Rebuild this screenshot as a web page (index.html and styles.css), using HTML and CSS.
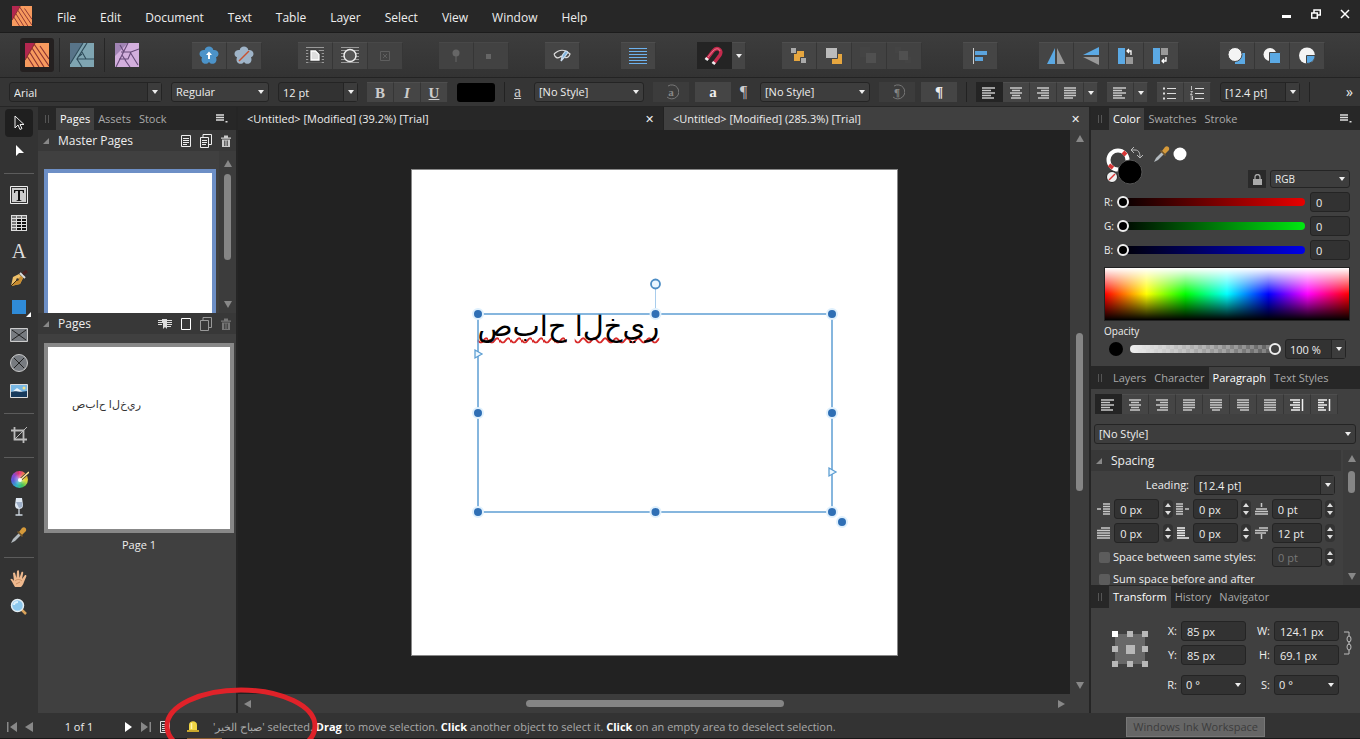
FILE: index.html
```html
<!DOCTYPE html>
<html lang="en">
<head>
    <meta charset="UTF-8">
    <meta name="viewport" content="width=device-width, initial-scale=1.0">
    <title>Publisher - Untitled</title>
    <link rel="stylesheet" href="styles.css">
</head>
<body>

    <!-- Shared icon shapes -->
    <svg class="icon-defs" width="0" height="0" aria-hidden="true">
        <symbol id="logo-publisher" viewBox="0 0 24 24">
            <path fill="#f79a5e" d="M0 0h24v24H0z"/>
            <path fill="#b3274f" d="M0 0h10L0 17z"/>
            <path stroke="#8a3030" stroke-width="1.1" fill="none" d="M10 0 0 17M9 1l15 22M7 5l12 19M4.500 9 14 24M2 13l7 11M15 3l9 13"/>
        </symbol>
        <symbol id="al-left" viewBox="0 0 14 12"><path d="M0 1h13M0 3.500h9M0 6h13M0 8.500h9M0 11h12"/></symbol>
        <symbol id="al-center" viewBox="0 0 14 12"><path d="M1 1h12M3 3.500h8M1 6h12M3 8.500h8M2 11h10"/></symbol>
        <symbol id="al-right" viewBox="0 0 14 12"><path d="M1 1h12M5 3.500h8M1 6h12M5 8.500h8M2 11h11"/></symbol>
        <symbol id="al-just" viewBox="0 0 14 12"><path d="M1 1h12M1 3.500h12M1 6h12M1 8.500h12M1 11h9"/></symbol>
        <symbol id="al-jcenter" viewBox="0 0 14 12"><path d="M1 1h12M1 3.500h12M1 6h12M1 8.500h12M3 11h8"/></symbol>
        <symbol id="al-jright" viewBox="0 0 14 12"><path d="M1 1h12M1 3.500h12M1 6h12M1 8.500h12M4 11h9"/></symbol>
        <symbol id="al-full" viewBox="0 0 14 12"><path d="M1 1h12M1 3.500h12M1 6h12M1 8.500h12M1 11h12"/></symbol>
        <symbol id="al-spine" viewBox="0 0 14 12"><path d="M0 1h10M3 3.500h7M0 6h10M3 8.500h7M1 11h9M12.500 0v12"/></symbol>
        <symbol id="al-away" viewBox="0 0 14 12"><path d="M1 1h9M1 3.500h6M1 6h9M1 8.500h6M1 11h8M12.500 0v12"/></symbol>
        <symbol id="panel-menu" viewBox="0 0 14 10"><path stroke="#ddd" stroke-width="1.500" d="M0 1h8M0 3.500h8M0 6h8"/><path fill="#ddd" d="M9.500 7h2v1.500h-2z"/></symbol>
        <symbol id="trash" viewBox="0 0 10 12"><path d="M0 2.500h10v1.300H0zM3 .500h4v2H3zM1 4.500h8V12H1z" fill="currentColor"/><path d="M3.500 5.500V11M5 5.500V11M6.500 5.500V11" stroke="#333" stroke-width=".7"/></symbol>
        <symbol id="copies" viewBox="0 0 12 14"><path fill="none" stroke="currentColor" d="M.500 3.500h8v10h-8zM3 3V.500h8.500v10H9"/></symbol>
        <symbol id="dropper" viewBox="0 0 18 18">
            <path fill="#b4bbc0" d="M1 17 3 13l6-6 2 2-6 6z"/>
            <path fill="#d69a3a" d="M9 6l3-4c2-2 5 0 4 3l-4 4z"/>
            <path fill="#7a5a2a" d="m8 5 5 5-1 1-5-5z"/>
        </symbol>
        <symbol id="persona-back" viewBox="0 0 20 20"><path fill="currentColor" d="M10 .500c2.200 0 4 1.500 4.300 3.500 2.800-.3 5.200 1.200 5.200 3.700 0 1.700-1 3-2.500 3.600 1 2.600.5 4.800-1.400 5.900-1.900 1.200-4.200.700-5.600-1.200-1.400 1.900-3.700 2.400-5.600 1.200-1.900-1.100-2.400-3.300-1.400-5.900C1.500 10.700.5 9.400.5 7.700.5 5.200 2.900 3.700 5.700 4 6 2 7.800.5 10 .5z"/></symbol>
    </svg>

    <!-- Menu bar -->
    <header class="menubar">
        <svg class="app-logo" width="20" height="20"><use href="#logo-publisher"/></svg>
        <nav class="menus">
            <button>File</button>
            <button>Edit</button>
            <button>Document</button>
            <button>Text</button>
            <button>Table</button>
            <button>Layer</button>
            <button>Select</button>
            <button>View</button>
            <button>Window</button>
            <button>Help</button>
        </nav>
        <div class="window-buttons">
            <button aria-label="Minimize"><svg width="10" height="10"><path fill="#fff" d="M0 6h9v3H0z"/></svg></button>
            <button aria-label="Restore"><svg width="10" height="10" fill="none" stroke="#fff"><path stroke-width="1.500" d="M.700 4h5.600v5H.700zM3 3.500V1h6.300v5H7"/></svg></button>
            <button aria-label="Close"><svg width="10" height="10"><path stroke="#fff" stroke-width="1.500" d="m1 1 8 8M9 1 1 9"/></svg></button>
        </div>
    </header>

    <!-- Main toolbar -->
    <div class="toolbar">
        <div class="personas">
            <button class="active" aria-label="Publisher"><svg width="24" height="24"><use href="#logo-publisher"/></svg></button>
            <button aria-label="Designer"><svg width="24" height="24" viewBox="0 0 24 24"><path fill="#7fa5b2" d="M0 0h24v24H0z"/><path fill="#587489" d="M0 0h13L0 21z"/><path stroke="#2f4c5a" stroke-width="1.100" fill="none" d="M13 0 0 21M17 0 7 16h17M7 16l5 8M17 0l-3 5M12 9l4 7M8 14l4-3"/></svg></button>
            <button aria-label="Photo"><svg width="24" height="24" viewBox="0 0 24 24"><path fill="#d3afdd" d="M0 0h24v24H0z"/><path fill="#a184b4" d="M0 0h13L0 13z"/><path stroke="#664a78" stroke-width="1.100" fill="none" d="M13 0 7 12l4 6M6 9h10l8-3M16 9l-3 7H4M10 17l5 7M15 9l8 13M5 2l4 7M7 12l-6 12"/></svg></button>
        </div>
        <div class="groups">
            <div class="group">
                <button aria-label="Defaults"><svg width="20" height="20" color="#4c93c9"><use href="#persona-back"/><path fill="#fff" d="M10 5.500 13 9h-2v4H9V9H7z"/></svg></button>
                <button aria-label="Revert"><svg width="20" height="20" color="#9fb4c8"><use href="#persona-back"/><path stroke="#c8502f" stroke-width="1.500" d="m5 15 10-10"/></svg></button>
            </div>
            <div class="group">
                <button aria-label="Wrap"><svg width="20" height="20" stroke="#999"><path d="M1 1.500h18M1 4.500h18M1 7.500h18M1 10.500h18M1 13.500h18M1 16.500h18"/><path stroke="#444" stroke-width="1.500" fill="#333" d="M4 3h7l5 4.500V16H4z"/><path stroke="#fff" stroke-width="1.300" fill="#ddd" d="M6 5h4.500L14 8.500V14H6z"/></svg></button>
                <button aria-label="Wrap outline"><svg width="20" height="20" stroke="#999"><path d="M1 1.500h18M1 4.500h18M1 7.500h18M1 10.500h18M1 13.500h18M1 16.500h18"/><circle cx="10" cy="9.500" r="6" fill="#555" stroke="#eee" stroke-width="1.500"/></svg></button>
                <button class="dim" aria-label="Clear wrap"><svg width="12" height="12" fill="none" stroke="#5e5e5e"><path d="M1.500 1.500h9v9h-9zM4 4l4 4M8 4 4 8"/></svg></button>
            </div>
            <div class="group">
                <button class="dim" aria-label="Pin"><svg width="12" height="16"><circle cx="6" cy="5" r="3.500" fill="#666"/><path stroke="#666" d="M6 7v7"/></svg></button>
                <button class="dim" aria-label="Pin inline"><svg width="16" height="16"><path fill="#666" d="M3 6h5v5H3z"/></svg></button>
            </div>
            <div class="group">
                <button aria-label="Preview"><svg width="18" height="14" fill="none" stroke="#dcdcdc" stroke-width="1.200"><path d="M1 5c5-5 11-5 16 0-1 3-3 4-5 3.500M1 5c1 3 3 5 6 3 1-1 2-1 3 0"/><path fill="#7cb4e0" stroke="#cde" d="m8 12 1.500-6 3-4c2 0 2.500 1 2 2l-3 4z"/></svg></button>
            </div>
            <div class="group spaced">
                <button aria-label="Baseline grid"><svg width="18" height="18" stroke="#6db2ee"><path d="M0 1.500h18M0 4.500h18M0 7.500h18M0 10.500h18M0 13.500h18M0 16.500h18"/></svg></button>
            </div>
            <div class="group spaced">
                <button class="active" aria-label="Snapping"><svg width="22" height="20" fill="none"><path stroke="#c42a4c" stroke-width="3.500" d="m4 13 6-8c4-5 10-1 7 4l-6 8"/><path stroke="#ec7890" d="m5 11 5-6c3-3 6-3 7 0"/><path stroke="#eee" stroke-width="3.500" d="m3 14 1.500-2M10 18l1.500-2"/></svg></button>
                <button class="arrow" aria-label="Snapping options"></button>
            </div>
            <div class="group">
                <button aria-label="To back"><svg width="18" height="18"><path fill="#e6a63f" d="M4 4h10v10H4z"/><path fill="#aaa" stroke="#444" d="M.500.500h6v6h-6zM10.500 10.500h6v6h-6z"/></svg></button>
                <button aria-label="Back one"><svg width="18" height="18"><path fill="#e6a63f" d="M7 7h10v10H7z"/><path fill="#bbb" stroke="#444" d="M.500.500h12v11H.500z"/></svg></button>
                <button class="dim" aria-label="Forward one"><svg width="18" height="18"><path fill="#444" d="M0 0h10v10H0z"/><path fill="#505050" d="M6 6h10v10H6z"/></svg></button>
                <button class="dim" aria-label="To front"><svg width="18" height="18"><path fill="#444" d="M0 0h6v6H0zM10 10h6v6h-6z"/><path fill="#505050" d="M4 4h9v9H4z"/></svg></button>
            </div>
            <div class="group spaced">
                <button aria-label="Alignment"><svg width="18" height="18"><path stroke="#ccc" d="M2.500 1v16"/><path fill="#5ba3dc" d="M4 4h12v4H4zM4 10h8v4H4z"/></svg></button>
            </div>
            <div class="group spaced">
                <button aria-label="Flip horizontal"><svg width="20" height="18"><path fill="#5ba9e4" d="M9 1v16H1z"/><path fill="#999" d="M11 1v16h8z"/></svg></button>
                <button aria-label="Flip vertical"><svg width="18" height="20"><path fill="#5ba9e4" d="M17 1v8H1z"/><path fill="#999" d="M17 19v-8H1z"/></svg></button>
                <button aria-label="Rotate left"><svg width="18" height="18"><path fill="#5ba9e4" d="M1 1h7v16H1z"/><path fill="#999" d="M9 10h7v7H9z"/><path fill="none" stroke="#fff" stroke-width="1.300" d="M14 8V4h-4M12 2l-2 2 2 2"/></svg></button>
                <button aria-label="Rotate right"><svg width="18" height="18"><path fill="#5ba9e4" d="M1 1h7v16H1z"/><path fill="#999" d="M9 1h7v7H9z"/><path fill="none" stroke="#fff" stroke-width="1.300" d="M14 10v4h-4M12 12l-2 2 2 2"/></svg></button>
            </div>
            <div class="group spaced">
                <button aria-label="Insert behind"><svg width="20" height="20"><path fill="#5ba9e4" d="M8 7h10v11H8z"/><circle cx="8" cy="8.500" r="7" fill="#f4f4f4" stroke="#444"/></svg></button>
                <button aria-label="Insert on top"><svg width="20" height="20"><circle cx="8" cy="8.500" r="6.500" fill="#f4f4f4"/><path fill="#5ba9e4" stroke="#444" d="M7.500 6.500h11v11h-11z"/></svg></button>
                <button aria-label="Insert inside"><svg width="20" height="20"><circle cx="10" cy="9.500" r="8" fill="#f4f4f4"/><path fill="#5ba9e4" stroke="#444" d="M9.500 9.500h8.500c0 5-4 8-8.500 8z"/></svg></button>
            </div>
        </div>
    </div>

    <!-- Context toolbar -->
    <div class="contextbar">
        <div class="combo w-font"><input type="text" value="Arial" aria-label="Font family"><button class="arrow" aria-label="Font list"></button></div>
        <div class="select w-style"><select aria-label="Font style"><option>Regular</option></select></div>
        <div class="combo w-size"><input type="text" value="12 pt" aria-label="Font size"><button class="arrow" aria-label="Size list"></button></div>
        <div class="group small letters">
            <button class="b">B</button>
            <button class="i">I</button>
            <button class="u">U</button>
        </div>
        <button class="swatch" aria-label="Text colour"></button>
        <span class="divider"></span>
        <span class="style-mark under">a</span>
        <div class="select w-nostyle"><select aria-label="Character style"><option>[No Style]</option></select></div>
        <div class="pair">
            <button class="flat dim"><svg width="16" height="16" fill="none" stroke="#777"><path d="M5 2a7 7 0 1 1-1 11"/></svg><span>a</span></button>
            <button class="flat">a</button>
        </div>
        <span class="style-mark">¶</span>
        <div class="select w-nostyle"><select aria-label="Paragraph style"><option>[No Style]</option></select></div>
        <div class="pair">
            <button class="flat dim"><svg width="16" height="16" fill="none" stroke="#777"><path d="M5 2a7 7 0 1 1-1 11"/></svg><span>¶</span></button>
            <button class="flat">¶</button>
        </div>
        <span class="divider"></span>
        <div class="group small">
            <button class="active" aria-label="Left"><svg class="al"><use href="#al-left"/></svg></button>
            <button aria-label="Centre"><svg class="al"><use href="#al-center"/></svg></button>
            <button aria-label="Right"><svg class="al"><use href="#al-right"/></svg></button>
            <button aria-label="Justify"><svg class="al"><use href="#al-just"/></svg></button>
            <button class="arrow" aria-label="More alignment"></button>
        </div>
        <div class="group small">
            <button aria-label="Vertical align"><svg class="al"><use href="#al-left"/></svg></button>
            <button class="arrow" aria-label="More vertical alignment"></button>
        </div>
        <div class="group small">
            <button aria-label="Bullets"><svg width="14" height="14" stroke="#ddd"><path d="M4 2.500h9M4 7.500h9M4 12.500h9"/><path stroke-width="2" d="M0 2.500h2M0 7.500h2M0 12.500h2"/></svg></button>
            <button aria-label="Numbering"><svg width="14" height="14" stroke="#ddd" fill="none"><path d="M5 2.500h9M5 7.500h9M5 12.500h9"/><path stroke-width=".800" d="M1.500 0v4M.500 5.500h2L.500 8.500h2M.500 10h2v4h-2M.500 12h2"/></svg></button>
        </div>
        <div class="combo w-size"><input type="text" value="[12.4 pt]" aria-label="Leading"><button class="arrow" aria-label="Leading list"></button></div>
        <span class="divider"></span>
        <button class="more">»</button>
    </div>

    <main class="workspace">

        <!-- Tools -->
        <div class="tools">
            <button class="active" aria-label="Move tool"><svg width="12" height="16"><path fill="#222" stroke="#eee" d="M2 1v12l3-3 2 4.500 2-1-2-4h4z"/></svg></button>
            <button aria-label="Node tool"><svg width="12" height="14"><path fill="#fff" d="M3 1v11l3-3h5z"/></svg></button>
            <hr>
            <button aria-label="Frame text"><svg width="18" height="18"><path fill="#333" stroke="#eee" d="M.500.500h17v17H.500z"/><path fill="#ccc" d="M2 2h14v14H2z"/><path fill="#111" d="M4 4h10v3h-1l-.5-2H10v9l1.500.500v.5h-5v-.5L8 14V5H5.500L5 7H4z"/></svg></button>
            <button aria-label="Table"><svg width="16" height="16"><path fill="#ddd" d="M0 0h16v16H0z"/><path stroke="#111" stroke-width="2" d="M2 5h13M2 8h13M2 11h13M2 14h13"/><path stroke="#777" stroke-width="2" d="M1 2h14M1 5h4M1 8h4M1 11h4M1 14h4"/><path stroke="#ddd" d="M5.500 0v16M10.500 0v16"/></svg></button>
            <button class="art-text" aria-label="Artistic text">A</button>
            <button aria-label="Pen"><svg width="18" height="18"><path fill="#edc06a" d="M1 16 3 7l6-3 4 4-3 6z"/><path fill="#c98c2e" d="m1 16 9-2 3-6-2-2z"/><path stroke="#3a2a10" d="m1 16 6-6"/><circle cx="7.500" cy="9.500" r="1.200" fill="#333"/><path stroke="#ddd" stroke-width="2" d="m10 3 5 5"/><path stroke="#4a2020" stroke-width="3" d="m13 4 4-3"/></svg></button>
            <button aria-label="Rectangle"><svg width="24" height="20"><path fill="#2f8bd8" d="M5 3h14v14H5z"/><path fill="#fff" d="M24 15v5h-5z"/></svg></button>
            <button aria-label="Picture frame"><svg width="18" height="14" stroke="#ccc"><path fill="#777b80" d="M.500.500h17v13H.500z"/><path stroke="#222" d="m2 2 14 10M16 2 2 12"/></svg></button>
            <button aria-label="Ellipse frame"><svg width="18" height="18"><circle cx="9" cy="9" r="8.500" fill="#777b80" stroke="#ccc"/><path stroke="#222" d="m4 4 10 10M14 4 4 14"/></svg></button>
            <button aria-label="Place image"><svg width="18" height="14"><path fill="#79b8e4" stroke="#ddd" d="M.500.500h17v13H.500z"/><path fill="#e8f2fa" d="m2 8 5-4 6 4z"/><path fill="#173a5c" d="M1 8c5-2 8 1 16-1v6H1z"/><circle cx="14" cy="4" r="1.500" fill="#f2e08a"/></svg></button>
            <hr>
            <button aria-label="Crop"><svg width="18" height="18" fill="none" stroke="#bbb" stroke-width="1.800"><path d="M1 4.500h12.500V17M4.500 1v12.500H17"/><path stroke-width="1" d="M17 1 4 14"/></svg></button>
            <hr>
            <button aria-label="Fill"><span class="wheel"><svg width="18" height="17"><path stroke="#333" stroke-width="3" d="m9 9 9-8"/><path stroke="#ffe9a0" stroke-width="1.500" d="m9 9 9-8"/><circle cx="9" cy="9" r="2" fill="#fff"/></svg></span></button>
            <button aria-label="Transparency"><svg width="10" height="18"><path fill="#dfe8f2" d="M2 0h6l1 7c0 3-2 4-4 4S1 10 1 7z"/><path fill="#9fb0c8" d="M2 4h6l.5 3c0 2-1.500 3-3.500 3z"/><path stroke="#cdd6e0" stroke-width="1.300" d="M5 11v6M1.500 17h7"/></svg></button>
            <button aria-label="Colour picker"><svg width="18" height="18"><use href="#dropper"/></svg></button>
            <hr>
            <button aria-label="View"><svg width="18" height="18"><path fill="#efb98e" d="M5 17C3 14 2 11 .500 9.500c0-1.500 2-1 3.500 1.500L3 3c1-1 2-.5 2.200.5L6.500 8 7 1c.8-1 2-.8 2 .5L9.500 8l2-6c1-.8 2 0 1.700 1L12 9l3-4c1-.3 1.800.5 1.300 1.500L14 12c-1 3-2 4-3 5z"/><path stroke="#b97c50" stroke-width=".7" fill="none" d="M5 11c2-2 5-2 7 0M6 14l4-2"/></svg></button>
            <button aria-label="Zoom"><svg width="18" height="18"><path stroke="#d9a25a" stroke-width="2.500" d="m11 11 5 5"/><circle cx="7.500" cy="7.500" r="6" fill="#8cc7ec" stroke="#e4eef4" stroke-width="1.500"/><path stroke="#d8effc" stroke-width="2" fill="none" d="M4 7c0-2 2-3 4-3"/></svg></button>
        </div>

        <!-- Pages panel -->
        <aside class="left-panel">
            <div class="tabs">
                <span class="grip"></span>
                <button class="active">Pages</button>
                <button>Assets</button>
                <button>Stock</button>
                <svg class="panel-menu" width="14" height="10"><use href="#panel-menu"/></svg>
            </div>
            <div class="section-head">
                <span class="fold"></span>
                <h2>Master Pages</h2>
                <svg width="10" height="12" fill="none" stroke="#eee"><path d="M.500.500h9v11h-9zM2 3.500h6M2 5.500h6M2 7.500h6M2 9.500h4"/></svg>
                <svg width="12" height="14" color="#eee"><use href="#copies"/><path stroke="#eee" d="M2 6.500h5M2 8.500h5M2 10.500h4"/></svg>
                <svg width="10" height="12" color="#ccc"><use href="#trash"/></svg>
            </div>
            <div class="masters">
                <div class="master-thumb"></div>
                <div class="vscroll"><i class="up"></i><b></b><i class="down"></i></div>
            </div>
            <div class="section-head">
                <span class="fold"></span>
                <h2>Pages</h2>
                <svg class="wide-icon" width="14" height="12" stroke="#ddd"><path d="M0 2.500h5M0 4.500h5M0 6.500h4M9 2.500h5M9 4.500h5M9 6.500h5M9 8.500h4"/><path fill="#ddd" stroke="none" d="M4 1h5v10l-2-2-2 2V4H4z"/></svg>
                <svg width="10" height="12" fill="none" stroke="#fff"><path d="M.500.500h9v11h-9z"/></svg>
                <svg width="12" height="14" color="#999"><use href="#copies"/></svg>
                <svg width="10" height="12" color="#777"><use href="#trash"/></svg>
            </div>
            <div class="page-list">
                <div class="page-thumb"><span class="isolated" dir="ltr">ص&zwnj;ب&zwnj;ا&zwnj;ح ا&zwnj;ل&zwnj;خ&zwnj;ي&zwnj;ر</span></div>
                <p>Page 1</p>
            </div>
        </aside>

        <!-- Document view -->
        <section class="document">
            <div class="doc-tabs">
                <div class="doc-tab"><span>&lt;Untitled&gt; [Modified] (39.2%) [Trial]</span><button aria-label="Close tab">✕</button></div>
                <div class="doc-tab active"><span>&lt;Untitled&gt; [Modified] (285.3%) [Trial]</span><button aria-label="Close tab">✕</button></div>
            </div>
            <div class="view">
                <div class="canvas">
                    <div class="page">
                        <div class="text-frame">
                            <p class="isolated" dir="ltr"><span>ص&zwnj;ب&zwnj;ا&zwnj;ح</span> <span>ا&zwnj;ل&zwnj;خ&zwnj;ي&zwnj;ر</span></p>
                        </div>
                        <svg class="handles" width="390" height="260" viewBox="0 0 390 260">
                            <path fill="none" stroke="#5f9fd3" stroke-width="1.500" d="M10 40h354v198H10z"/>
                            <path stroke="#a9cdec" d="M187.500 15v20"/>
                            <circle cx="187.500" cy="10" r="4.500" fill="#eaf6ff" stroke="#4c8cc4" stroke-width="1.800"/>
                            <g fill="#2f6fb5" stroke="#dff0fd" stroke-width="2">
                                <circle cx="10" cy="40" r="5"/><circle cx="187.500" cy="40" r="5"/><circle cx="364" cy="40" r="5"/>
                                <circle cx="10" cy="139" r="5"/><circle cx="364" cy="139" r="5"/>
                                <circle cx="10" cy="238" r="5"/><circle cx="187.500" cy="238" r="5"/><circle cx="364" cy="238" r="5"/>
                                <circle cx="374" cy="248" r="5"/>
                            </g>
                            <path fill="#eef8ff" stroke="#5f9fd3" stroke-width="1.300" d="m7 76 7 4-7 4zM361 194l7 4-7 4z"/>
                        </svg>
                    </div>
                </div>
                <div class="vscroll"><i class="up"></i><b></b><i class="down"></i></div>
            </div>
            <div class="hscroll"><i class="left"></i><b></b><i class="right"></i></div>
        </section>

        <!-- Studio panels -->
        <aside class="right-panel">
            <div class="tabs">
                <span class="grip"></span>
                <button class="active">Color</button>
                <button>Swatches</button>
                <button>Stroke</button>
                <svg class="panel-menu" width="14" height="10"><use href="#panel-menu"/></svg>
            </div>
            <div class="color-panel">
                <div class="color-top">
                    <svg width="84" height="42" fill="none">
                        <circle cx="14" cy="14" r="9.500" stroke="#fff" stroke-width="4"/>
                        <path stroke="#d93636" stroke-width="4" d="M19 6l3 3M5 19l4 3"/>
                        <circle cx="26" cy="26" r="12" fill="#000" stroke="#555"/>
                        <circle cx="8" cy="31" r="5.500" fill="#eee" stroke="#222"/><path stroke="#d93636" stroke-width="1.500" d="m5 34 6-6"/>
                        <path stroke="#bbb" d="M27 4h4c4 0 5 3 5 8M30 1l-3 3 3 3M33 9l3 3 3-3"/>
                        <circle cx="76" cy="8" r="6.500" fill="#fff"/>
                        <use href="#dropper" x="49" y="-1" width="18" height="18"/>
                    </svg>
                    <button class="lock" aria-label="Lock"><svg width="9" height="11"><path fill="#aaa" d="M0 5h9v6H0z"/><path fill="none" stroke="#aaa" stroke-width="1.300" d="M2 5V3a2.500 2.500 0 0 1 5 0v2"/></svg></button>
                    <div class="select w-mode"><select aria-label="Colour mode"><option>RGB</option></select></div>
                </div>
                <div class="channel red"><label for="r">R:</label><input id="r" type="range" min="0" max="255" value="0"><input type="text" value="0" aria-label="Red value"></div>
                <div class="channel green"><label for="g">G:</label><input id="g" type="range" min="0" max="255" value="0"><input type="text" value="0" aria-label="Green value"></div>
                <div class="channel blue"><label for="b">B:</label><input id="b" type="range" min="0" max="255" value="0"><input type="text" value="0" aria-label="Blue value"></div>
                <div class="spectrum"></div>
                <label class="opacity-label" for="opacity">Opacity</label>
                <div class="opacity">
                    <span class="dot"></span>
                    <input id="opacity" type="range" min="0" max="100" value="100">
                    <div class="combo w-opacity"><input type="text" value="100 %" aria-label="Opacity value"><button class="arrow" aria-label="Opacity slider"></button></div>
                </div>
            </div>

            <div class="tabs">
                <span class="grip"></span>
                <button>Layers</button>
                <button>Character</button>
                <button class="active">Paragraph</button>
                <button>Text Styles</button>
            </div>
            <div class="paragraph-panel">
                <div class="group small">
                    <button class="active" aria-label="Left"><svg class="al"><use href="#al-left"/></svg></button>
                    <button aria-label="Centre"><svg class="al"><use href="#al-center"/></svg></button>
                    <button aria-label="Right"><svg class="al"><use href="#al-right"/></svg></button>
                    <button aria-label="Justify left"><svg class="al"><use href="#al-just"/></svg></button>
                    <button aria-label="Justify centre"><svg class="al"><use href="#al-jcenter"/></svg></button>
                    <button aria-label="Justify right"><svg class="al"><use href="#al-jright"/></svg></button>
                    <button aria-label="Justify all"><svg class="al"><use href="#al-full"/></svg></button>
                    <button aria-label="Towards spine"><svg class="al bright"><use href="#al-spine"/></svg></button>
                    <button aria-label="Away from spine"><svg class="al bright"><use href="#al-away"/></svg></button>
                </div>
                <div class="select"><select aria-label="Paragraph style"><option>[No Style]</option></select></div>
                <div class="spacing">
                    <div class="spacing-body">
                        <div class="section-head"><span class="fold"></span><h2>Spacing</h2></div>
                        <div class="leading"><label for="leading">Leading:</label><div class="combo"><input id="leading" type="text" value="[12.4 pt]"><button class="arrow" aria-label="Leading list"></button></div></div>
                        <div class="metrics">
                            <svg class="al"><path d="M0 6h4M6 1h7M6 3.500h7M6 6h7M6 8.500h7M6 11h7"/></svg>
                            <input type="text" value="0 px" aria-label="Left indent"><span class="spin"></span>
                            <svg class="al"><path d="M0 1h7M0 3.500h7M0 6h7M0 8.500h7M0 11h7M9 6h4"/></svg>
                            <input type="text" value="0 px" aria-label="Right indent"><span class="spin"></span>
                            <svg class="al"><path d="M6.500 0v4M1 6h11M0 8.500h13M0 11h13"/></svg>
                            <input type="text" value="0 pt" aria-label="Space before"><span class="spin"></span>

                            <svg class="al"><path d="M4 1h9M0 3.500h13M0 6h13M0 8.500h13M0 11h13"/></svg>
                            <input type="text" value="0 px" aria-label="First line indent"><span class="spin"></span>
                            <svg class="al bright"><path d="M1 1h8M1 3.500h8M1 6h8M1 8.500h8M1 11h12"/></svg>
                            <input type="text" value="0 px" aria-label="Last line outdent"><span class="spin"></span>
                            <svg class="al"><path d="M4 1h9M0 3.500h13M0 6h11M6.500 7v5"/></svg>
                            <input type="text" value="12 pt" aria-label="Space after"><span class="spin"></span>
                        </div>
                        <div class="check-row">
                            <input type="checkbox" id="same"><label for="same">Space between same styles:</label>
                            <input type="text" value="0 pt" aria-label="Space between" disabled><span class="spin"></span>
                        </div>
                        <div class="check-row">
                            <input type="checkbox" id="sum"><label for="sum">Sum space before and after</label>
                        </div>
                    </div>
                    <div class="vscroll"><i class="up"></i><b></b><i class="down"></i></div>
                </div>
            </div>

            <div class="tabs">
                <span class="grip"></span>
                <button class="active">Transform</button>
                <button>History</button>
                <button>Navigator</button>
            </div>
            <div class="transform-panel">
                <svg class="anchor" width="36" height="36" fill="#b8b8b8"><path fill="#686868" d="M3 3h30v30H3z"/><path d="M15 0h6v6h-6zM30 0h6v6h-6zM0 15h6v6H0zM14 14h9v9h-9zM30 15h6v6h-6zM0 30h6v6H0zM15 30h6v6h-6zM30 30h6v6h-6z"/><path fill="#fff" d="M0 0h6v6H0z"/></svg>
                <div class="fields">
                    <label for="tx">X:</label><input id="tx" type="text" value="85 px">
                    <label for="tw">W:</label><input id="tw" type="text" value="124.1 px">
                    <label for="ty">Y:</label><input id="ty" type="text" value="85 px">
                    <label for="th">H:</label><input id="th" type="text" value="69.1 px">
                    <label class="lower" for="tr">R:</label><div class="select lower"><select id="tr"><option>0 °</option></select></div>
                    <label class="lower" for="ts">S:</label><div class="select lower"><select id="ts"><option>0 °</option></select></div>
                </div>
                <svg class="chain" width="8" height="24" fill="none" stroke="#bbb"><path d="M0 1h5v4M0 23h5v-4M5 10v4"/><ellipse cx="5" cy="8" rx="2" ry="3"/><ellipse cx="5" cy="16" rx="2" ry="3"/></svg>
            </div>
        </aside>
    </main>

    <!-- Status bar -->
    <footer class="statusbar">
        <div class="page-nav">
            <button aria-label="First page"><svg width="12" height="10" fill="#888"><path d="M1 0h1.500v10H1zM11 0v10L4 5z"/></svg></button>
            <button aria-label="Previous page"><svg width="9" height="10" fill="#888"><path d="M8 0v10L0 5z"/></svg></button>
            <span>1 of 1</span>
            <button aria-label="Next page"><svg width="9" height="10" fill="#fff"><path d="M1 0v10l7-5z"/></svg></button>
            <button aria-label="Last page"><svg width="12" height="10" fill="#888"><path d="M1 0v10l7-5zM9.500 0H11v10H9.500z"/></svg></button>
            <button aria-label="Preflight"><svg width="12" height="12" fill="none" stroke="#ddd"><path d="M1.500.500h9v11h-9zM3 3.500h6M3 5.500h6M3 7.500h6M3 9.500h4"/></svg></button>
        </div>
        <svg class="bell" width="14" height="14"><path fill="#f0d543" d="M3 10V5c0-5 8-5 8 0v5z"/><path fill="#c9a82c" d="M1 10h12v2H1z"/><path stroke="#fff6b0" stroke-width="1.500" d="M5.500 3v6"/></svg>
        <p>'<bdi>صباح الخير</bdi>' selected. <b>Drag</b> to move selection. <b>Click</b> another object to select it. <b>Click</b> on an empty area to deselect selection.</p>
        <span class="ink-tip">Windows Ink Workspace</span>
    </footer>

    <svg class="marker" width="160" height="54"><ellipse cx="78" cy="41" rx="74" ry="36" fill="none" stroke="#e02229" stroke-width="5"/></svg>

</body>
</html>
```
FILE: styles.css
```css
/* General Styling */
* {
    box-sizing: border-box;
}

body {
    margin: 0;
    height: 100vh;
    display: flex;
    flex-direction: column;
    overflow: hidden;
    position: relative;
    background-color: #333;
    color: #eee;
    font-family: "Open Sans", "Noto Sans", sans-serif;
    font-size: 11px;
    line-height: 16px;
}

button,
input,
select {
    font: inherit;
    color: inherit;
    margin: 0;
    padding: 0;
    border: 0;
    outline: none;
    min-width: 0;
    background: none;
}

button {
    display: flex;
    align-items: center;
    justify-content: center;
}

svg {
    display: block;
    flex: none;
}

h2,
p {
    margin: 0;
    font-weight: 400;
}

.icon-defs {
    position: absolute;
}

/* Menu bar */
.menubar {
    flex: none;
    height: 33px;
    display: flex;
    align-items: center;
    padding: 0 10px 0 12px;
    background-color: #272727;
    border-bottom: 1px solid #1c1c1c;
    font-size: 12px;
}

.menus {
    display: flex;
    gap: 24px;
    margin-left: 25px;
    padding-top: 4px;
}

.window-buttons {
    display: flex;
    gap: 19px;
    margin-left: auto;
    padding-bottom: 4px;
}

/* Toolbar */
.toolbar {
    flex: none;
    height: 45px;
    display: flex;
    align-items: center;
    padding-left: 20px;
    background: linear-gradient(#3d3d3d, #333);
    border-bottom: 1px solid #232323;
}

.personas {
    display: flex;
    gap: 11px;
}

.personas button {
    width: 34px;
    height: 34px;
    border-radius: 3px;
    position: relative;
}

.personas button + button::before {
    content: "";
    position: absolute;
    left: -6px;
    top: 0;
    height: 34px;
    border-left: 1px solid #262626;
}

.personas .active {
    background-color: #242020;
}

.groups {
    display: flex;
    gap: 36px;
    margin-left: 48px;
}

.spaced {
    margin-left: 5px;
}

.group {
    display: flex;
}

.group button {
    width: 35px;
    height: 27px;
    background-color: #454545;
    border-right: 1px solid #363636;
    border-top: 1px solid #4e4e4e;
}

.group .dim {
    background-color: #424242;
    border-top-color: #484848;
}

.group .active {
    background-color: #242424;
    border-color: #242424;
}

.group .arrow {
    width: 14px;
}

.small button {
    width: 27px;
    height: 20px;
}

.arrow::after,
.select::after {
    content: "";
    border: 3px solid transparent;
    border-top: 4px solid #eee;
    border-bottom: 0;
}

.al {
    width: 14px;
    height: 12px;
    stroke: #c8c8c8;
    stroke-width: 1.5px;
}

.bright {
    stroke: #f2f2f2;
}

/* Combos and fields */
.combo,
.select {
    height: 20px;
    display: flex;
    align-items: center;
    border: 1px solid #242424;
    border-radius: 3px;
    background-color: #323232;
    position: relative;
}

.combo input {
    flex: 1;
    height: 18px;
    padding-left: 4px;
}

.combo .arrow {
    width: 14px;
    height: 18px;
    background-color: #3c3c3c;
    border-left: 1px solid #242424;
}

.select {
    background-color: #3d3d3d;
}

.select select {
    appearance: none;
    width: 100%;
    height: 18px;
    padding-left: 4px;
}

.select::after {
    position: absolute;
    right: 4px;
    pointer-events: none;
}

/* Context bar */
.contextbar {
    flex: none;
    height: 29px;
    display: flex;
    align-items: center;
    gap: 9px;
    padding: 0 7px 0 9px;
    background-color: #353535;
    border-bottom: 1px solid #262626;
}

.contextbar > * {
    flex: none;
}

.w-font {
    width: 153px;
}

.w-style {
    width: 98px;
}

.w-size {
    width: 80px;
}

.w-nostyle {
    width: 110px;
}

.letters {
    font: 700 15px/18px "Liberation Serif", serif;
    color: #ccc;
}

.letters .i {
    font-style: italic;
}

.letters .u {
    text-decoration: underline;
}

.swatch {
    width: 38px;
    height: 19px;
    background-color: #000;
    border-radius: 3px;
}

.divider {
    height: 20px;
    border-left: 1px solid #222;
}

.style-mark {
    width: 11px;
    font: 16px/18px "Liberation Serif", serif;
    color: #ccc;
}

.under {
    text-decoration: underline;
}

.pair {
    display: flex;
    gap: 6px;
}

.flat {
    width: 36px;
    height: 20px;
    background-color: #454545;
    font: 700 15px/18px "Liberation Serif", serif;
}

.flat.dim {
    background-color: #3c3c3c;
    color: #888;
    font-size: 11px;
    position: relative;
}

.flat.dim svg {
    position: absolute;
}

.more {
    margin-left: auto;
    font-size: 14px;
}

/* Workspace */
.workspace {
    flex: 1;
    min-height: 0;
    display: grid;
    grid-template-columns: 38px 200px minmax(0, 1fr) 271px;
}

.tools {
    display: flex;
    flex-direction: column;
    align-items: center;
    padding-top: 2px;
    background-color: #333;
}

.tools button {
    width: 28px;
    height: 28px;
    border-radius: 4px;
}

.tools .active {
    background-color: #1f1f1f;
}

.tools hr {
    width: 30px;
    margin: 8px 0 7px;
    border: 0;
    border-top: 1px solid #5c5c5c;
}

.tools .art-text {
    font: 20px/28px "Liberation Serif", serif;
    color: #ddd;
}

.wheel {
    width: 17px;
    height: 17px;
    border-radius: 50%;
    background: radial-gradient(#fff8, transparent 50%), conic-gradient(#e8388a, #ee9a30, #d8dc3a, #42c25c, #30b4c8, #5560d8, #8a48d0, #e83858);
}

/* Tabs */
.tabs {
    flex: none;
    height: 23px;
    display: flex;
    align-items: flex-end;
    padding: 0 6px 0 7px;
    background-color: #272727;
    color: #aaa;
}

.tabs button {
    height: 22px;
    padding: 0 4px;
}

.tabs .active {
    background-color: #404040;
    color: #fff;
}

.grip {
    width: 4px;
    height: 8px;
    margin: 0 7px 7px 0;
    border: solid #555;
    border-width: 0 1px;
}

.panel-menu {
    margin: 0 0 6px auto;
}

.section-head {
    flex: none;
    height: 21px;
    display: flex;
    align-items: center;
    gap: 9px;
    padding: 0 5px;
    background-color: #383838;
}

.section-head h2 {
    flex: 1;
    font-size: 12px;
}

.fold {
    border: 3px solid transparent;
    border-right-color: #888;
    border-bottom-color: #888;
}

.left-panel {
    display: flex;
    flex-direction: column;
    min-height: 0;
    background-color: #404040;
    border-right: 2px solid #252525;
}

.masters {
    height: 162px;
    display: flex;
    justify-content: space-between;
    padding-left: 6px;
    overflow: hidden;
}

.master-thumb {
    width: 172px;
    height: 180px;
    margin-top: 18px;
    background-color: #fff;
    border: 4px solid #6d8fc6;
}

.page-list {
    padding: 9px 2px 0 6px;
    text-align: center;
}

.page-thumb {
    aspect-ratio: 1;
    margin-bottom: 4px;
    padding: 48px 0 0 24px;
    background-color: #fff;
    border: 4px solid #888;
    text-align: left;
    color: #333;
    font: 11px/18px "Liberation Sans", "DejaVu Sans", sans-serif;
}

.isolated {
    unicode-bidi: bidi-override;
    direction: ltr;
}

/* Scrollbars */
.vscroll {
    width: 17px;
    display: flex;
    flex-direction: column;
    align-items: center;
    justify-content: space-between;
    padding: 5px 0;
    background-color: #3c3c3c;
}

.vscroll b,
.hscroll b {
    width: 7px;
    border-radius: 4px;
    background-color: #858585;
}

.vscroll i,
.hscroll i {
    border: 4px solid transparent;
}

.vscroll .up {
    border-top: 0;
    border-bottom: 7px solid #888;
}

.vscroll .down {
    border-bottom: 0;
    border-top: 7px solid #888;
}

.masters .vscroll {
    padding: 9px 0 5px;
}

.masters .vscroll b {
    height: 86px;
    margin-bottom: 34px;
}

/* Document */
.document {
    display: flex;
    flex-direction: column;
    min-height: 0;
    background-color: #222;
}

.doc-tabs {
    height: 23px;
    display: grid;
    grid-template-columns: 1fr 1fr;
    gap: 1px;
}

.doc-tab {
    display: flex;
    align-items: center;
    justify-content: space-between;
    padding: 0 9px;
    background-color: #272727;
}

.doc-tab.active {
    background-color: #404040;
}

.view {
    flex: 1;
    min-height: 0;
    display: flex;
}

.canvas {
    flex: 1;
    display: flex;
    align-items: center;
    justify-content: center;
    background-color: #222;
}

.view .vscroll {
    width: 19px;
}

.view .vscroll b {
    height: 158px;
}

.hscroll {
    height: 19px;
    display: flex;
    align-items: center;
    justify-content: space-between;
    padding: 0 24px 0 6px;
    background-color: #3c3c3c;
}

.hscroll b {
    width: 258px;
    height: 7px;
}

.hscroll .left {
    border-left: 0;
    border-right: 7px solid #888;
}

.hscroll .right {
    border-right: 0;
    border-left: 7px solid #888;
}

.page {
    width: 485px;
    height: 485px;
    background-color: #fff;
    outline: 1px solid #888;
    position: relative;
}

.text-frame {
    position: absolute;
    left: 66px;
    top: 144px;
    width: 354px;
    height: 198px;
    color: #000;
    font: 29px/24px "Liberation Sans", "DejaVu Sans", sans-serif;
}

.text-frame p {
    white-space: nowrap;
}

.text-frame span {
    text-decoration: underline wavy #d82a2a 2px;
    text-decoration-skip-ink: none;
}

.handles {
    position: absolute;
    left: 56px;
    top: 104px;
}

/* Studio panels */
.right-panel {
    display: flex;
    flex-direction: column;
    min-height: 0;
    background-color: #404040;
    border-left: 2px solid #252525;
}

.color-panel {
    height: 236px;
    padding: 16px 10px 0 13px;
}

.color-top {
    display: flex;
    align-items: flex-end;
    gap: 4px;
    height: 44px;
}

.color-top > svg {
    align-self: flex-start;
}

.lock {
    width: 18px;
    height: 18px;
    margin: 0 0 2px auto;
    background-color: #2a2a2a;
}

.w-mode {
    width: 80px;
    height: 18px;
    margin-bottom: 2px;
    font-size: 10px;
}

.channel {
    height: 24px;
    display: flex;
    align-items: center;
    font-size: 10px;
}

.channel label {
    width: 13px;
}

.channel input[type="text"] {
    width: 40px;
    margin-left: 5px;
}

input[type="range"] {
    appearance: none;
    flex: 1;
    height: 8px;
    border-radius: 4px;
}

input[type="range"]::-webkit-slider-thumb {
    appearance: none;
    width: 12px;
    height: 12px;
    background-color: #000;
    border: 2px solid #eee;
    border-radius: 50%;
}

.red input[type="range"] {
    background: linear-gradient(90deg, #000, #e80000);
}

.green input[type="range"] {
    background: linear-gradient(90deg, #000, #00e810);
}

.blue input[type="range"] {
    background: linear-gradient(90deg, #000, #0000e8);
}

.channel input[type="text"],
.metrics input,
.check-row input[type="text"],
.fields input {
    height: 20px;
    padding-left: 5px;
    background-color: #323232;
    border: 1px solid #242424;
    border-radius: 3px;
    font-size: 11px;
}

.spectrum {
    height: 54px;
    margin-top: 5px;
    border: 1px solid #222;
    background: linear-gradient(#fff, #fff0 50%, #0000 50%, #000), linear-gradient(90deg, #f00, #ff0 17%, #0f0 33%, #0ff 50%, #00f 67%, #f0f 83%, #f00);
}

.opacity-label {
    display: block;
    margin-top: 2px;
    font-size: 10px;
}

.opacity {
    display: flex;
    align-items: center;
    padding-right: 4px;
}

.opacity .dot {
    width: 14px;
    height: 14px;
    margin: 0 7px 0 5px;
    border-radius: 50%;
    background-color: #000;
}

.opacity input[type="range"] {
    background: linear-gradient(90deg, #eee, #4040), repeating-conic-gradient(#555 0 25%, #777 0 50%) 0 0 / 8px 8px;
}

.opacity input[type="range"]::-webkit-slider-thumb {
    background-color: #404040;
}

.w-opacity {
    width: 61px;
    margin-left: 4px;
}

/* Paragraph panel */
.paragraph-panel {
    height: 196px;
    display: flex;
    flex-direction: column;
    padding-top: 5px;
    overflow: hidden;
}

.paragraph-panel > .group {
    margin: 0 4px 10px;
}

.paragraph-panel > .select {
    flex: none;
    margin: 0 4px 6px 3px;
}

.spacing {
    flex: 1;
    min-height: 0;
    display: flex;
    justify-content: space-between;
}

.spacing-body {
    width: 250px;
}

.spacing .vscroll b {
    height: 22px;
    margin-bottom: 72px;
}

.leading {
    display: flex;
    align-items: center;
    justify-content: flex-end;
    gap: 5px;
    padding: 4px 6px 0 0;
}

.leading .combo {
    width: 141px;
}

.metrics {
    display: grid;
    grid-template-columns: 14px 45px 10px 14px 45px 10px 14px 50px 10px;
    align-items: center;
    justify-content: space-between;
    row-gap: 4px;
    padding: 4px 6px 4px 6px;
}

.spin {
    width: 10px;
    height: 18px;
    display: flex;
    flex-direction: column;
    align-items: center;
    justify-content: center;
    gap: 4px;
    border-radius: 4px;
    background-color: #333;
}

.spin::before {
    content: "";
    border: 3px solid transparent;
    border-top: 0;
    border-bottom: 4px solid #ddd;
}

.spin::after {
    content: "";
    border: 3px solid transparent;
    border-bottom: 0;
    border-top: 4px solid #ddd;
}

.check-row {
    height: 20px;
    display: flex;
    align-items: center;
    gap: 3px;
    padding: 0 6px 0 8px;
    margin-bottom: 2px;
    white-space: nowrap;
}

.check-row label {
    flex: 1;
}

.check-row input[type="checkbox"] {
    appearance: none;
    width: 11px;
    height: 11px;
    border-radius: 2px;
    background-color: #5c5c5c;
}

.check-row input[type="text"] {
    width: 50px;
    color: #777;
    background-color: #383838;
}

/* Transform panel */
.transform-panel {
    flex: 1;
    display: flex;
    align-items: flex-start;
    padding: 13px 8px 0 21px;
}

.anchor {
    margin-top: 10px;
}

.fields {
    flex: 1;
    display: grid;
    grid-template-columns: 33px 65px 28px 65px;
    gap: 4px 0;
}

.fields label {
    padding-right: 4px;
    line-height: 20px;
    text-align: right;
}

.fields .select {
    background-color: #323232;
}

.lower {
    margin-top: 6px;
}

.chain {
    margin-top: 10px;
}

/* Status bar */
.statusbar {
    flex: none;
    height: 26px;
    display: flex;
    align-items: center;
    padding: 1px 95px 0 6px;
    background: linear-gradient(90deg, #181818 187px, #8a5a2c 187px 222px, #181818 222px) 0 100% / 100% 1px no-repeat #333;
    color: #aaa;
}

.page-nav {
    display: flex;
    align-items: center;
    gap: 7px;
    color: #eee;
}

.page-nav span {
    width: 76px;
    text-align: center;
}

.bell {
    margin: 0 13px 0 15px;
}

.statusbar b {
    color: #fff;
}

.ink-tip {
    margin-left: auto;
    padding: 1px 6px;
    background-color: #666;
    border: 1px solid #777;
    color: #3c3c3c;
}

.marker {
    position: absolute;
    left: 163px;
    bottom: 0;
}
```
